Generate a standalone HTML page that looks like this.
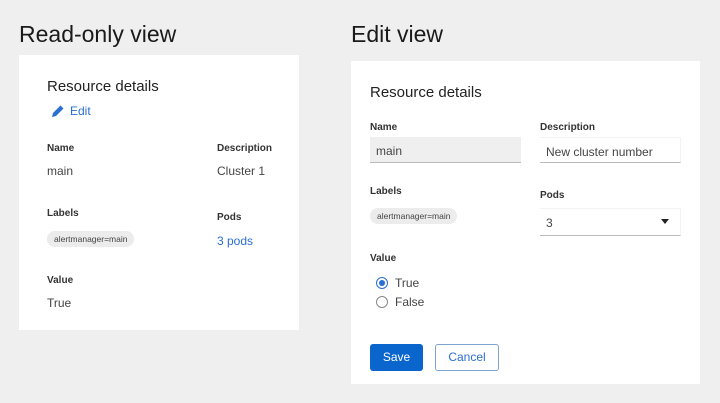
<!DOCTYPE html>
<html><head><style>
*{margin:0;padding:0;box-sizing:border-box}
body{width:720px;height:403px;background:#efefef;font-family:"Liberation Sans",sans-serif;color:#151515;position:relative;overflow:hidden}
.a{position:absolute;white-space:nowrap}
.h{font-size:23px;color:#1a1a1a}
.card{position:absolute;background:#fff}
.t{font-size:15px;color:#222}
.l{font-size:10px;font-weight:bold;color:#333}
.v{font-size:12px;color:#444}
.chip{background:#ececec;border-radius:10px;font-size:8.5px;color:#444;padding:0 7px;height:16px;line-height:16px}
.inp{position:absolute;height:26px;border-bottom:1px solid #bbb;font-size:12px;color:#444;padding:7px 6px}
.radio{position:absolute;width:12px;height:12px;border-radius:50%;border:1px solid #888;background:#fff}
</style></head><body>
<div class="a h" style="left:19px;top:21px">Read-only view</div>
<div class="a h" style="left:351px;top:21px">Edit view</div>

<div class="card" style="left:19px;top:55px;width:280px;height:275px"></div>
<div class="a t" style="left:47px;top:78px">Resource details</div>
<svg class="a" style="left:51px;top:104px" width="14" height="14" viewBox="0 0 14 14"><path d="M1 13 L2 9 L9.5 1.5 L12.5 4.5 L5 12 Z" fill="#2b6fd0"/></svg>
<div class="a v" style="left:70px;top:104px;color:#2b6fd0">Edit</div>
<div class="a l" style="left:47px;top:143px">Name</div>
<div class="a v" style="left:47px;top:164px">main</div>
<div class="a l" style="left:217px;top:143px">Description</div>
<div class="a v" style="left:217px;top:164px">Cluster 1</div>
<div class="a l" style="left:47px;top:208px">Labels</div>
<div class="a chip" style="left:47px;top:231px">alertmanager=main</div>
<div class="a l" style="left:217px;top:212px">Pods</div>
<div class="a v" style="left:217px;top:234px;color:#2b6fd0">3 pods</div>
<div class="a l" style="left:47px;top:275px">Value</div>
<div class="a v" style="left:47px;top:296px">True</div>

<div class="card" style="left:351px;top:61px;width:349px;height:323px"></div>
<div class="a t" style="left:370px;top:84px">Resource details</div>
<div class="a l" style="left:370px;top:122px">Name</div>
<div class="inp" style="left:370px;top:137px;width:151px;background:#efefef">main</div>
<div class="a l" style="left:540px;top:122px">Description</div>
<div class="inp" style="left:540px;top:137px;width:141px;background:#fff;border-top:1px solid #f3f3f3;border-right:1px solid #f3f3f3">New cluster number</div>
<div class="a l" style="left:370px;top:186px">Labels</div>
<div class="a chip" style="left:370px;top:208px">alertmanager=main</div>
<div class="a l" style="left:540px;top:190px">Pods</div>
<div class="inp" style="left:540px;top:208px;width:141px;height:28px;border-top:1px solid #f3f3f3;border-right:1px solid #f3f3f3">3</div>
<svg class="a" style="left:661px;top:219px" width="8" height="5"><path d="M0 0H8L4 5Z" fill="#222"/></svg>
<div class="a l" style="left:370px;top:253px">Value</div>
<div class="radio" style="left:376px;top:277px;border-color:#2b6fd0"><div style="position:absolute;left:2px;top:2px;width:6px;height:6px;border-radius:50%;background:#2b6fd0"></div></div>
<div class="a v" style="left:395px;top:276px">True</div>
<div class="radio" style="left:376px;top:296px"></div>
<div class="a v" style="left:395px;top:295px">False</div>
<div class="a" style="left:370px;top:344px;width:53px;height:27px;background:#0a66cc;border-radius:3px;color:#fff;font-size:12px;text-align:center;line-height:27px">Save</div>
<div class="a" style="left:435px;top:344px;width:64px;height:27px;border:1px solid #7fa3d0;border-radius:3px;color:#2b6fd0;font-size:12px;text-align:center;line-height:25px">Cancel</div>
</body></html>
